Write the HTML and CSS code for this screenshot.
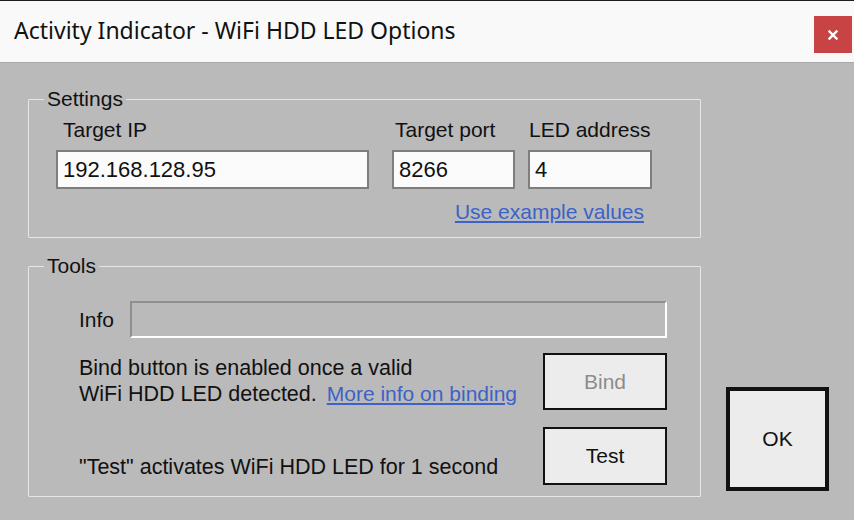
FILE: index.html
```html
<!DOCTYPE html>
<html lang="en">
<head>
  <meta charset="UTF-8" />
  <title>Activity Indicator - WiFi HDD LED Options</title>
  <link rel="stylesheet" href="styles.css">
</head>
<body>

<div class="window">

  <div class="titlebar">
    <span class="title">Activity Indicator - WiFi HDD LED Options</span>
    <button class="close-btn" aria-label="Close">
      <svg width="12" height="12" viewBox="0 0 12 12">
        <path d="M2.5 2.5 L9.5 9.5 M9.5 2.5 L2.5 9.5" stroke="#fff" stroke-width="2.4" stroke-linecap="square" />
      </svg>
    </button>
  </div>

  <div class="client">
    <div class="groups">

      <fieldset class="group settings">
        <legend>Settings</legend>
        <div class="group-body">
          <div class="fields">
            <div class="field ip">
              <label class="lbl-ip">Target IP</label>
              <input type="text" value="192.168.128.95">
            </div>
            <div class="field port">
              <label class="lbl-port">Target port</label>
              <input type="text" value="8266">
            </div>
            <div class="field led">
              <label>LED address</label>
              <input type="text" value="4">
            </div>
          </div>
          <div class="example-row">
            <a href="#" class="link">Use example values</a>
          </div>
        </div>
      </fieldset>

      <fieldset class="group tools">
        <legend>Tools</legend>
        <div class="group-body">
          <div class="info-row">
            <span class="info-label">Info</span>
            <div class="info-box"></div>
          </div>
          <div class="tool-row bind-row">
            <p class="tool-text">Bind button is enabled once a valid<br>WiFi HDD LED detected. <a href="#" class="link small-link">More info on binding</a></p>
            <button class="btn" disabled>Bind</button>
          </div>
          <div class="tool-row test-row">
            <p class="tool-text">"Test" activates WiFi HDD LED for 1 second</p>
            <button class="btn">Test</button>
          </div>
        </div>
      </fieldset>

    </div>

    <button class="btn ok-btn">OK</button>
  </div>

</div>

</body>
</html>
```

FILE: styles.css
```css
body {
  margin: 0;
  font-family: "Liberation Sans", Arial, sans-serif;
  background-color: #bababa;
}

.window {
  width: 854px;
  height: 520px;
  border-top: 1px solid #1c1c1c;
  box-sizing: border-box;
  background: #bababa;
}

/* Title bar: caption text + red close button */
.titlebar {
  height: 62px;
  box-sizing: border-box;
  display: flex;
  align-items: flex-start;
  justify-content: space-between;
  background: #f9f9f9;
  border-bottom: 1px solid #a9a9a9;
}

.title {
  font-family: "Noto Sans", "Open Sans", sans-serif;
  font-size: 23px;
  color: #111;
  margin-left: 14px;
  margin-top: 14px;
  line-height: 30px;
}

.close-btn {
  width: 38px;
  height: 37px;
  margin-top: 15px;
  margin-right: 2px;
  border: none;
  background: #c84343;
  display: flex;
  align-items: center;
  justify-content: center;
  padding: 0;
}

.client {
  display: flex;
  padding: 25px 0 0 28px;
  gap: 25px;
}

.groups {
  width: 673px;
  display: flex;
  flex-direction: column;
  gap: 17px;
}

/* Group boxes */
.group {
  margin: 0;
  padding: 0;
  border: 1px solid #e6e6e6;
  border-radius: 1px;
  font-size: 21px;
  color: #111;
}

.group legend {
  font-size: 21px;
  line-height: 22px;
  padding: 0 3px;
  margin-left: 15px;
}

.settings .group-body {
  padding: 8px 47px 14px 27px;
}

.fields {
  display: flex;
}

.field {
  display: flex;
  flex-direction: column;
  gap: 9px;
}

.field label {
  line-height: 23px;
  margin-left: 1px;
}

.field .lbl-ip {
  margin-left: 7px;
}

.field .lbl-port {
  margin-left: 3px;
}

.field input {
  height: 39px;
  box-sizing: border-box;
  border: 2px solid #7e7e7e;
  background: #fbfbfb;
  font-family: "Liberation Sans", Arial, sans-serif;
  font-size: 22px;
  color: #111;
  padding: 0 5px;
  margin: 0;
}

.ip input {
  width: 313px;
}

.port {
  margin-left: 23px;
}

.port input {
  width: 123px;
}

.led {
  margin-left: 13px;
}

.led input {
  width: 124px;
}

.example-row {
  display: flex;
  justify-content: flex-end;
  margin-top: 11px;
  padding-right: 9px;
  line-height: 23px;
}

.link {
  color: #3d62c8;
  text-decoration: underline;
}

.small-link {
  font-size: 21px;
  margin-left: 4px;
}

.tools .group-body {
  padding: 24px 33px 11px 50px;
}

.info-row {
  display: flex;
  align-items: center;
}

.info-label {
  width: 51px;
}

.info-box {
  flex-grow: 1;
  height: 37px;
  box-sizing: border-box;
  border: 2px solid #fff;
  border-top-color: #8f8f8f;
  border-left-color: #8f8f8f;
  background: #bababa;
}

.tool-row {
  display: flex;
  justify-content: space-between;
}

.bind-row {
  align-items: center;
  margin-top: 15px;
}

.test-row {
  align-items: flex-end;
  margin-top: 17px;
}

.tool-text {
  margin: 0;
  font-size: 21.5px;
  line-height: 25px;
}

.test-row .tool-text {
  padding-bottom: 5px;
}

.btn {
  width: 124px;
  height: 58px;
  box-sizing: border-box;
  border: 2px solid #111;
  background: #ececec;
  font-family: "Liberation Sans", Arial, sans-serif;
  font-size: 21px;
  color: #111;
  padding: 0;
}

.btn:disabled {
  color: #8c8c8c;
  height: 57px;
}

.ok-btn {
  width: 103px;
  height: 104px;
  border-width: 4px;
  align-self: flex-end;
  margin-bottom: 6px;
}
```
